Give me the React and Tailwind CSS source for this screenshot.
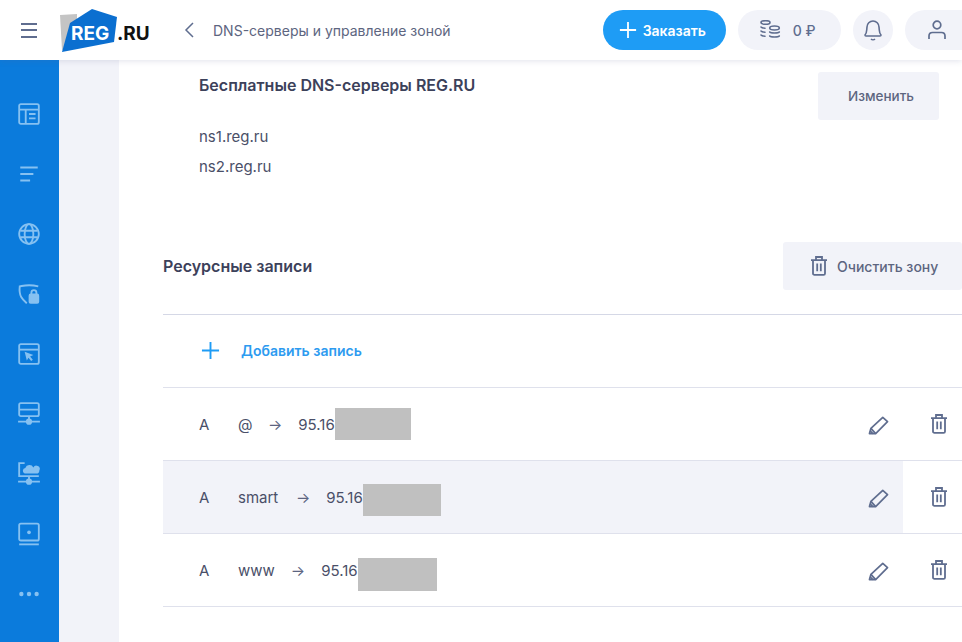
const Trash = ({ className }) => (
  <svg viewBox="0 0 18 20" fill="none" stroke="currentColor" strokeWidth="1.800" className={className}>
    <path d="M1 4.200h16M3 4.200V17.400a1.400 1.400 0 0 0 1.400 1.400h9.200a1.400 1.400 0 0 0 1.400-1.400V4.200M6 4.200V1h6v3.200M7.200 7.500v7.800M10.800 7.500v7.800" />
  </svg>
);

const PencilIcon = ({ className }) => (
  <svg viewBox="0 0 22 20" fill="none" stroke="currentColor" strokeWidth="1.800" strokeLinejoin="round" className={className}>
    <path d="M1.500 18.500l1.500-5.500L15.500 1.500l5 4.500L8 18.500z" />
    <path d="M3 13l5 5.500M2.200 15.700l2.800 2.800" />
  </svg>
);

const PlusIcon = ({ className }) => (
  <svg viewBox="0 0 20 20" fill="none" stroke="currentColor" strokeWidth="2" className={className}>
    <path d="M10 1v18M1 10h18" />
  </svg>
);

const sideIcons = [
  <g key="a"><rect x="2" y="2" width="18" height="18" rx="1.500" /><path d="M2 7h18M8 7v13M11 11h6M11 15h6" /></g>,
  <path key="b" d="M3 5h16M3 11h12M3 17h9" />,
  <g key="c"><circle cx="11" cy="11" r="9" /><ellipse cx="11" cy="11" rx="4" ry="9" /><path d="M3 8h16M3 14h16" /></g>,
  <g key="d">
    <path d="M9 19.500C5 16 1.500 13 2.500 4 8 3 11 2 19.500 4" />
    <rect x="11.500" y="11.500" width="8" height="7.500" rx="1" fill="currentColor" />
    <path d="M13.200 11.500V9.800a2.300 2.300 0 0 1 4.600 0v1.700" />
  </g>,
  <g key="e">
    <rect x="2" y="2" width="18" height="18" rx="1.500" /><path d="M2 7h18" />
    <path d="M7 9l8 3-3 1.200 2.500 3-1.500 1.300-2.500-3L9 17z" fill="currentColor" stroke="none" />
  </g>,
  <g key="f">
    <rect x="2" y="1" width="18" height="12" rx="1.500" /><path d="M2 7h18M11 13v4M1 18h20" />
    <circle cx="11" cy="18" r="2" fill="currentColor" />
  </g>,
  <g key="g">
    <path d="M7 1H2v12h18" /><path d="M11 13v4M1 18h20" />
    <circle cx="11" cy="18" r="2" fill="currentColor" />
    <path d="M7 10.500a2.600 2.600 0 0 1 .6-5A4 4 0 0 1 15 5a2.800 2.800 0 0 1 5.500 2.800 2.600 2.600 0 0 1-1.500 2.700z" fill="currentColor" stroke="none" />
  </g>,
  <g key="h">
    <rect x="2" y="1.500" width="18" height="15.500" rx="1.500" /><path d="M2 20.500h18" />
    <circle cx="11" cy="9.500" r="1.700" fill="currentColor" stroke="none" />
  </g>,
  <g key="i" fill="currentColor" stroke="none">
    <circle cx="4" cy="11" r="2" /><circle cx="11" cy="11" r="2" /><circle cx="18" cy="11" r="2" />
  </g>,
];

const records = [
  { name: "@", ip: "95.16", nameCls: "w-[14px]", hide: "w-[76px] h-[32px] -mt-[3px]", active: false },
  { name: "smart", ip: "95.16", nameCls: "w-[42px]", hide: "w-[78px] h-[32px] mt-[3px]", active: true },
  { name: "www", ip: "95.16", nameCls: "", hide: "w-[79px] h-[33px] mt-[6px]", active: false },
];

function RecordRow({ name, ip, nameCls, hide, active }) {
  return (
    <div className="flex h-[73px] items-center border-b border-[#dfe1ec] text-[15px] text-[#4a4f68]">
      <div className={`flex h-full w-[740px] shrink-0 items-center pt-[2px] pl-9 ${active ? "bg-[#f2f3f9]" : ""}`}>
        <span className="w-[39px]">A</span>
        <span className={nameCls}>{name}</span>
        <span className="mr-[16px] ml-[16px] text-[#5c6480]">→</span>
        <span>{ip}</span>
        <span className={`bg-[#c0c0c0] ${hide}`} />
        <PencilIcon className="mr-[14px] ml-auto h-[19px] w-[21px] text-[#5f6d8f]" />
      </div>
      <Trash className="ml-[27px] h-[20px] w-[18px] shrink-0 text-[#5f6d8f]" />
    </div>
  );
}

export default function App() {
  return (
    <div className="flex h-[642px] w-[962px] flex-col overflow-hidden bg-white font-['Inter',sans-serif]">
      <header className="relative z-10 flex h-[60px] shrink-0 items-center bg-white shadow-[0_1px_6px_rgba(90,100,150,0.18)]">
        <div className="ml-[21px] flex w-[16px] shrink-0 flex-col gap-[4.500px]">
          <span className="h-[2px] bg-[#5f6d8f]" />
          <span className="h-[2px] bg-[#5f6d8f]" />
          <span className="h-[2px] bg-[#5f6d8f]" />
        </div>
        <div className="ml-[22px] flex w-[92px] shrink-0 items-center">
          <div className="relative h-[44px] w-[58px] shrink-0">
            <svg viewBox="0 0 58 44" className="absolute inset-0 h-full w-full">
              <path d="M1 7l17-1 0 30-15 6z" fill="#c4c4c4" />
              <path d="M11 15L33 1l25 8-3 25-52 10z" fill="#0b6fd0" />
            </svg>
            <span className="absolute top-[15px] left-[12px] text-[19px] leading-[22px] font-bold text-white">REG</span>
          </div>
          <span className="mt-[8px] text-[19px] leading-[22px] font-bold text-[#111]">.RU</span>
        </div>
        <svg viewBox="0 0 10 16" fill="none" stroke="#5f6d8f" strokeWidth="1.500" className="ml-[33px] h-[16px] w-[10px] shrink-0">
          <path d="M9 1L2 8l7 7" />
        </svg>
        <span className="ml-[19px] shrink-0 text-[14px] whitespace-nowrap text-[#5d6580]">DNS-серверы и управление зоной</span>
        <button className="ml-[152px] flex h-[40px] w-[123px] shrink-0 items-center rounded-full bg-[#1e9cf5] pl-[16px] text-[14px] font-semibold text-white">
          <PlusIcon className="h-[18px] w-[18px]" />
          <span className="ml-[6px]">Заказать</span>
        </button>
        <div className="ml-[12px] flex h-[40px] w-[103px] shrink-0 items-center rounded-full bg-[#f2f3f9] pl-[21px] text-[14px] font-medium text-[#5f6d8f]">
          <svg viewBox="0 0 22 20" fill="none" stroke="#5f6d8f" strokeWidth="1.600" strokeLinecap="round" className="h-[20px] w-[22px]">
            <ellipse cx="6.500" cy="2.500" rx="4.500" ry="1.800" />
            <path d="M2 7c1 1 2 1.200 4 1.200M2 11c1 1 2 1.200 4 1.200M2 15c1 1 2 1.200 4 1.200" />
            <ellipse cx="15.500" cy="8" rx="4.800" ry="2" />
            <path d="M10.700 12c1 1.400 8.600 1.400 9.600 0M10.700 16c1 1.400 8.600 1.400 9.600 0" />
          </svg>
          <span className="ml-[12px]">0 ₽</span>
        </div>
        <div className="ml-[12px] flex h-[40px] w-[40px] shrink-0 items-center justify-center rounded-full bg-[#f2f3f9]">
          <svg viewBox="0 0 20 22" fill="none" stroke="#5f6d8f" strokeWidth="1.600" className="h-[22px] w-[20px]">
            <path d="M2 16c2-2 1.500-4 2-8a6 6 0 0 1 12 0c.5 4 0 6 2 8 0 .8-.4 1-1 1H3c-.6 0-1-.2-1-1zM8 20c1 1 3 1 4 0" />
          </svg>
        </div>
        <div className="ml-[12px] flex h-[40px] w-[90px] shrink-0 items-center rounded-l-full bg-[#f2f3f9] pl-[22px]">
          <svg viewBox="0 0 20 20" fill="none" stroke="#5f6d8f" strokeWidth="1.700" className="h-[20px] w-[20px]">
            <circle cx="10" cy="5" r="3.800" />
            <path d="M2 19v-3c0-2 1.500-3.500 3.500-3.500h9c2 0 3.500 1.500 3.500 3.500v3" />
          </svg>
        </div>
      </header>

      <div className="flex min-h-0 flex-1">
        <aside className="flex w-[59px] shrink-0 flex-col bg-[#0b7bdc] pt-[24px] text-[#86c1f1]">
          {sideIcons.map((icon, i) => (
            <div key={i} className="flex h-[60px] w-[58px] shrink-0 items-center justify-center">
              <svg viewBox="0 0 22 22" fill="none" stroke="currentColor" strokeWidth="1.700" className="h-[24px] w-[24px]">
                {icon}
              </svg>
            </div>
          ))}
        </aside>
        <div className="w-[60px] shrink-0 bg-[#f2f3f9]" />

        <main className="w-[843px] shrink-0 pl-[44px]">
          <section className="flex h-[182px] justify-between pt-[12px] pl-[36px]">
            <div>
              <h2 className="pt-[2px] text-[16px] leading-[22px] font-semibold text-[#3c415a]">Бесплатные DNS-серверы REG.RU</h2>
              <p className="mt-[26px] text-[15px] leading-[30px] text-[#4a4f68]">ns1.reg.ru</p>
              <p className="text-[15px] leading-[30px] text-[#4a4f68]">ns2.reg.ru</p>
            </div>
            <button className="mr-[23px] h-[48px] w-[121px] rounded-[3px] bg-[#f2f3f9] pl-[5px] text-[13.500px] font-medium text-[#5d6580]">
              Изменить
            </button>
          </section>

          <section className="flex h-[73px] items-start justify-between border-b border-[#d5d8e6]">
            <h2 className="pt-[13px] text-[16px] leading-[22px] font-semibold text-[#3c415a]">Ресурсные записи</h2>
            <button className="flex h-[48px] w-[179px] items-center rounded-[3px] bg-[#f2f3f9] pl-[27px] text-[14px] font-medium text-[#5d6580]">
              <Trash className="h-[20px] w-[18px] text-[#5f6d8f]" />
              <span className="ml-[9px]">Очистить зону</span>
            </button>
          </section>

          <div className="flex h-[73px] items-center border-b border-[#dfe1ec] pb-[2px] pl-[38px] text-[14px] font-semibold text-[#2d9bf0]">
            <PlusIcon className="h-[19px] w-[19px] text-[#1e9cf5]" />
            <span className="ml-[21px]">Добавить запись</span>
          </div>

          {records.map((r) => (
            <RecordRow key={r.name} {...r} />
          ))}
        </main>
      </div>
    </div>
  );
}
